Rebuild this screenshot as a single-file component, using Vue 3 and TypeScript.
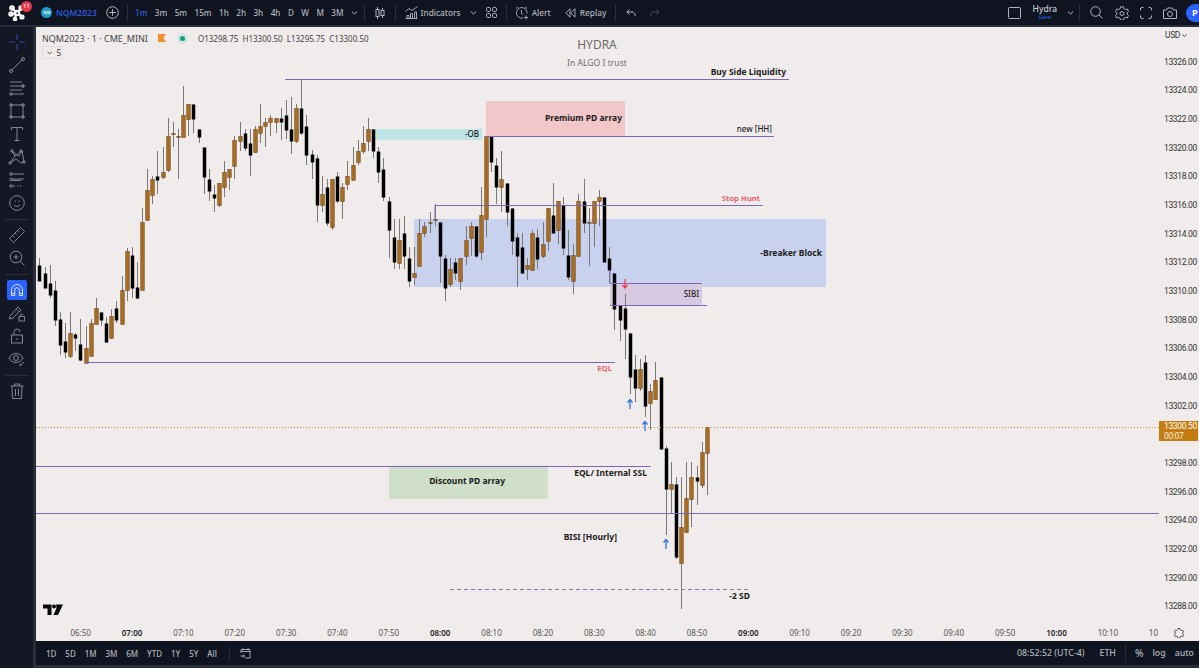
<template>
  <div class="app">
    <!-- top toolbar -->
    <header class="topbar">
      <div class="brand">
        <svg class="logo" width="18" height="17" viewBox="0 0 18 17" fill="none" stroke="#fff" stroke-width="2.2" stroke-linecap="round">
          <circle cx="4" cy="4" r="1.7" />
          <circle cx="9" cy="9" r="2.2" />
          <circle cx="3" cy="10" r="1.6" />
          <circle cx="13" cy="4" r="1.6" />
          <circle cx="7" cy="15" r="1.2" />
          <circle cx="14" cy="13" r="1.5" />
          <path d="M5 5l3 3M11 7l2-2M4 10h3M8 11l-1 3M11 10l2 2" />
        </svg>
        <span class="badge">11</span>
      </div>
      <div class="symbol">
        <span class="symbol-dot">100</span>
        <span class="symbol-name">NQM2023</span>
      </div>
      <svg class="ico plus" width="13" height="13" viewBox="0 0 13 13" fill="none" stroke="currentColor">
        <circle cx="6.5" cy="6.5" r="5.8" />
        <path d="M6.5 3.2v6.6M3.2 6.5h6.6" />
      </svg>
      <i class="sep s1"></i>
      <div class="intervals">
        <span v-for="(t, i) in intervals" :key="t" class="interval" :class="{ active: i === 0 }">{{ t }}</span>
      </div>
      <svg class="ico chev c1" width="7" height="4" viewBox="0 0 7 4" fill="none" stroke="currentColor"><path d="M.8.6 3.5 3 6.2.6" /></svg>
      <i class="sep s2"></i>
      <svg class="ico candle" width="10" height="12" viewBox="0 0 10 12" fill="none" stroke="currentColor">
        <path d="M2.5 0v12M7.5 1v10" />
        <rect x="1" y="2.5" width="3" height="7" fill="#0f1420" />
        <rect x="6" y="3.5" width="3" height="5" fill="#0f1420" />
      </svg>
      <i class="sep s3"></i>
      <svg class="ico ind" width="13" height="13" viewBox="0 0 13 13" fill="none" stroke="currentColor" stroke-width=".9">
        <path d="M.5 5.5 4 2.5l3 2 5.5-4" />
        <path d="M.5 12.5h12M2 12.5v-3h2v3M5.5 12.5v-5h2v5M9.5 12.5v-6.500h2v6.500" />
      </svg>
      <span class="tb-label l-ind">Indicators</span>
      <svg class="ico chev c2" width="7" height="4" viewBox="0 0 7 4" fill="none" stroke="currentColor"><path d="M.8.6 3.5 3 6.2.6" /></svg>
      <svg class="ico layouts" width="11" height="11" viewBox="0 0 11 11" fill="none" stroke="currentColor">
        <rect x=".5" y=".5" width="4" height="4" rx="1.2" />
        <rect x="6.500" y=".5" width="4" height="4" rx="1.2" />
        <rect x=".5" y="6.500" width="4" height="4" rx="1.2" />
        <rect x="6.500" y="6.500" width="4" height="4" rx="1.2" />
      </svg>
      <i class="sep s4"></i>
      <svg class="ico alert" width="14" height="14" viewBox="0 0 14 14" fill="none" stroke="currentColor" stroke-width=".9">
        <path d="M8 12A5.300 5.300 0 1 1 12 7.500" />
        <path d="M6.500 4v3.500l1.800 1M1 2.500 3 .8M10 .8l2 1.700M11 9.500v4M9 11.500h4" />
      </svg>
      <span class="tb-label l-alert">Alert</span>
      <svg class="ico replay" width="11" height="10" viewBox="0 0 11 10" fill="none" stroke="currentColor" stroke-width=".9">
        <path d="M5 .8.8 5 5 9.200zM10 .8 5.800 5 10 9.200z" />
      </svg>
      <span class="tb-label l-replay">Replay</span>
      <i class="sep s5"></i>
      <svg class="ico undo" width="10" height="8" viewBox="0 0 10 8" fill="none" stroke="currentColor">
        <path d="M3.500.5 .8 3l2.700 2.500M1 3h5c2 0 3.200 1.500 3.200 4" />
      </svg>
      <svg class="ico redo" width="10" height="8" viewBox="0 0 10 8" fill="none" stroke="currentColor">
        <path d="M6.500.5 9.200 3 6.500 5.500M9 3H4C2 3 .8 4.500.8 7" />
      </svg>

      <div class="top-right">
        <svg class="ico" width="13" height="12" viewBox="0 0 13 12" fill="none" stroke="currentColor"><rect x=".5" y=".5" width="12" height="11" rx="1" /></svg>
        <div class="layout-name"><span>Hydra</span><small>Save</small></div>
        <svg class="ico chev c3" width="7" height="4" viewBox="0 0 7 4" fill="none" stroke="currentColor"><path d="M.8.6 3.5 3 6.2.6" /></svg>
        <i class="sep s6"></i>
        <svg class="ico search" width="13" height="13" viewBox="0 0 13 13" fill="none" stroke="currentColor">
          <circle cx="5.500" cy="5.500" r="4.800" />
          <path d="m9 9 3.500 3.500" />
        </svg>
        <svg class="ico gear" width="14" height="14" viewBox="0 0 14 14" fill="none" stroke="currentColor">
          <path d="M5.600.8h2.800l.4 1.800 1.600.9 1.800-.5 1.300 2.400-1.300 1.300v1.600l1.300 1.300-1.300 2.400-1.800-.5-1.600.9-.4 1.800H5.600l-.4-1.800-1.600-.9-1.800.5L.5 9.600l1.300-1.300V6.700L.5 5.400l1.300-2.400 1.800.5 1.600-.9z" />
          <circle cx="7" cy="7.500" r="2" />
        </svg>
        <svg class="ico full" width="12" height="12" viewBox="0 0 12 12" fill="none" stroke="currentColor">
          <path d="M.5 3.500V2A1.500 1.500 0 0 1 2 .5h1.500M8.500.5H10A1.500 1.500 0 0 1 11.500 2v1.500M11.500 8.500V10A1.500 1.500 0 0 1 10 11.500H8.500M3.500 11.500H2A1.500 1.500 0 0 1 .5 10V8.500" />
        </svg>
        <svg class="ico camera" width="14" height="12" viewBox="0 0 14 12" fill="none" stroke="currentColor">
          <path d="M.5 3h3l1-2h5l1 2h3v8.500H.5z" />
          <circle cx="7" cy="7" r="2.500" />
        </svg>
        <span class="publish">P</span>
      </div>
    </header>

    <div class="middle">
      <!-- drawing tools -->
      <aside class="tools">
        <template v-for="(tool, i) in tools" :key="i">
          <i v-if="tool === 'sep'" class="tool-sep"></i>
          <div v-else class="tool" :class="{ on: tool === 'magnet', cross: tool === 'cross' }">
            <svg width="18" height="18" viewBox="0 0 18 18" fill="none" stroke="currentColor" stroke-width=".9">
              <g v-if="tool === 'cross'"><path d="M9 1v6M9 11v6M1 9h6M11 9h6" stroke-width="1.100" /></g>
              <g v-else-if="tool === 'line'"><path d="M4 14 14 4" /><circle cx="3" cy="15" r="1.500" /><circle cx="15" cy="3" r="1.500" /></g>
              <g v-else-if="tool === 'fib'"><path d="M2 3h12M2 7h14M2 11h12M4 15h12" /><circle cx="15" cy="7" r="1.300" /><circle cx="3" cy="15" r="1.300" /></g>
              <g v-else-if="tool === 'rect'"><rect x="3" y="3" width="12" height="12" /><circle cx="3" cy="3" r="1.300" /><circle cx="15" cy="3" r="1.300" /><circle cx="3" cy="15" r="1.300" /><circle cx="15" cy="15" r="1.300" /></g>
              <g v-else-if="tool === 'text'"><path d="M3.500 5V2.500h11V5M9 2.500v13M6.500 15.500h5" /></g>
              <g v-else-if="tool === 'pattern'"><path d="M4 3l3 5-5 7 6-4 5 4 3-1-2-11-3 5-2-1zM7 8l6-5" /><circle cx="4" cy="3" r="1.200" /><circle cx="13" cy="3" r="1.200" /><circle cx="2" cy="15" r="1.200" /><circle cx="16" cy="14" r="1.200" /></g>
              <g v-else-if="tool === 'forecast'"><path d="M4 3h12M4 8h12M4 9.500h9M4 15h3M9 15h1.500M12 15h1.500" /><circle cx="3" cy="3" r="1.300" /><circle cx="3" cy="8.500" r="1.300" /><circle cx="3" cy="15" r="1.300" /></g>
              <g v-else-if="tool === 'smile'"><circle cx="9" cy="9" r="7.300" /><path d="M6 11c1 1.800 5 1.800 6 0M7 6.500v1.500M11 6.500v1.500" /></g>
              <g v-else-if="tool === 'ruler'"><path d="M1.500 12.500 12.500 1.500l4 4-11 11zM4.500 9.500l1.800 1.800M7 7l1.800 1.800M9.500 4.500l1.800 1.800" /></g>
              <g v-else-if="tool === 'zoom'"><circle cx="8" cy="8" r="5.800" /><path d="m12 12 4.500 4.500M8 5.500v5M5.500 8h5" /></g>
              <g v-else-if="tool === 'magnet'"><path d="M3.500 14.500V9a5.500 5.500 0 0 1 11 0v5.500h-3.200V9a2.300 2.300 0 0 0-4.600 0v5.500zM3.500 12.500h3.200M11.300 12.500h3.200" stroke-width="1" /></g>
              <g v-else-if="tool === 'pencil'"><path d="M2 12 10 3l3 3-8 8-3.500 1zM8.500 5l3 3" /><rect x="11" y="12.500" width="5.500" height="4.500" /><path d="M12.500 12.500V11a1.300 1.300 0 0 1 2.500 0" /></g>
              <g v-else-if="tool === 'lock'"><rect x="3.500" y="8" width="11" height="8" /><path d="M6 8V5a3 3 0 0 1 6 0M9 11v2" /></g>
              <g v-else-if="tool === 'eye'"><path d="M1 8c3-6 11-6 14 0-3 6-11 6-14 0z" /><circle cx="8" cy="8" r="2.500" /><path d="m11 16 5-4M12 13.500l2 2" /></g>
              <g v-else-if="tool === 'trash'"><path d="M2.500 4h13M6.500 4V2h5v2M4 4l.5 12.500h9L14 4M7.500 7v7M10.500 7v7" /></g>
            </svg>
          </div>
        </template>
      </aside>

      <div class="workspace">
        <div class="plot-row">
          <main class="plot">
            <svg class="canvas" viewBox="36 27 1123 597" width="1123" height="597">
              <!-- zones -->
              <rect x="486" y="101" width="139" height="35" fill="#f2c7c9" />
              <rect x="372" y="129" width="110" height="11" fill="#c0e3e4" />
              <rect x="414" y="219" width="412" height="68" fill="#c8d1ee" />
              <rect x="610" y="283" width="92" height="22" fill="#d8c9e2" />
              <rect x="389" y="466" width="159" height="33" fill="#d0dfca" />

              <!-- candles -->
              <g v-for="b in bars" :key="b.x">
                <line :x1="b.x" :x2="b.x" :y1="b.wickTop" :y2="b.wickBottom" class="wick" />
                <rect
                  :x="b.x - 1.75"
                  :y="b.bodyTop"
                  width="3.500"
                  :height="b.bodyHeight"
                  :class="b.up ? 'up' : 'down'"
                />
              </g>

              <!-- levels -->
              <path class="level" d="M285 79.500H789M486 136.500H774M435 219V205.500H763M610 270V283.500H702M610 305.500H707M85 362.500H615M36 466.500H651M36 513.500H1159" />
              <path class="dashed" d="M450 589.500H751" />
              <path class="last" d="M36 427.500H1159" />

              <!-- arrows -->
              <path class="arrow red" d="M625 279v9M622.500 285l2.500 3 2.500-3" />
              <path class="arrow blue" d="M630 409v-9M627.500 402.500l2.500-3 2.500 3" />
              <path class="arrow blue" d="M645 431v-9M642.500 424.500l2.500-3 2.500 3" />
              <path class="arrow blue" d="M666 549v-9M663.500 542.500l2.500-3 2.500 3" />

              <!-- labels -->
              <text
                v-for="n in notes"
                :key="n.text"
                :x="n.x"
                :y="n.y"
                class="note"
                :class="n.cls"
                text-anchor="end"
              >{{ n.text }}</text>
              <text x="597" y="49" class="watermark big" text-anchor="middle">HYDRA</text>
              <text x="597" y="66" class="watermark" text-anchor="middle">In ALGO I trust</text>

              <path d="M43 604.500h8.500v10.500h-4v-6.500H43zM56 604.500h7l-5 10.500h-4.500l3-7z" fill="#0a0a0a" />
              <circle cx="54" cy="606.500" r="2" fill="#0a0a0a" />
            </svg>

            <div class="legend">
              <div class="legend-row">
                <span class="legend-title">NQM2023 · 1 · CME_MINI</span>
                <svg class="flag" width="8" height="8" viewBox="0 0 8 8"><path d="M0 0h8L5.500 4 8 8H0z" fill="#f2902b" /></svg>
                <span class="status"><i></i></span>
                <span class="ohlc">O13298.75&nbsp; H13300.50&nbsp; L13295.75&nbsp; C13300.50</span>
              </div>
              <div class="legend-count">
                <svg width="6" height="4" viewBox="0 0 6 4" fill="none" stroke="#444"><path d="M.5.5 3 3 5.500.5" /></svg>
                5
              </div>
            </div>
          </main>

          <div class="prices">
            <div class="currency">USD <svg width="5" height="3" viewBox="0 0 5 3" fill="none" stroke="#444"><path d="M.4.4 2.500 2.500 4.600.4" /></svg></div>
            <div v-for="p in prices" :key="p" class="price">{{ p === '13300.00' ? '' : p }}</div>
            <div class="last-tag"><span>13300.50</span><span class="timer">00:07</span></div>
          </div>
        </div>

        <div class="time-row">
          <div class="times">
            <span v-for="t in times" :key="t" class="time" :class="{ hour: t.endsWith(':00') }">{{ t }}</span>
            <span class="time tail">10</span>
          </div>
          <div class="axis-gear">
            <svg width="10" height="10" viewBox="0 0 14 14" fill="none" stroke="#333" stroke-width="1.200">
              <path d="M5.600.8h2.800l.4 1.800 1.600.9 1.800-.5 1.300 2.400-1.300 1.300v1.600l1.300 1.300-1.300 2.400-1.800-.5-1.600.9-.4 1.800H5.600l-.4-1.800-1.600-.9-1.800.5L.5 9.600l1.300-1.300V6.700L.5 5.400l1.300-2.400 1.800.5 1.600-.9z" />
            </svg>
          </div>
        </div>

        <footer class="bottombar">
          <span v-for="r in ranges" :key="r" class="range">{{ r }}</span>
          <i class="sep s7"></i>
          <svg class="ico goto" width="11" height="11" viewBox="0 0 11 11" fill="none" stroke="currentColor" stroke-width=".9">
            <path d="M1 5V1.500h9V10H5M1 3.500h9M3 .2v2M8 .2v2M.5 8h4M3 6.500 4.500 8 3 9.500" />
          </svg>
          <div class="bottom-right">
            <span class="clock">08:52:52 (UTC-4)</span>
            <span>ETH</span>
            <i class="sep"></i>
            <span class="pct">%</span>
            <span>log</span>
            <span>auto</span>
          </div>
        </footer>
      </div>
    </div>
  </div>
</template>

<script setup lang="ts">
type Bar = [number, number, number, number, number]

const intervals = ['1m', '3m', '5m', '15m', '1h', '2h', '3h', '4h', 'D', 'W', 'M', '3M']
const ranges = ['1D', '5D', '1M', '3M', '6M', 'YTD', '1Y', '5Y', 'All']
const tools = [
  'cross', 'line', 'fib', 'rect', 'text', 'pattern', 'forecast', 'smile', 'sep',
  'ruler', 'zoom', 'sep', 'magnet', 'pencil', 'lock', 'eye', 'sep', 'trash',
]

const prices = Array.from({ length: 20 }, (_, i) => (13326 - i * 2).toFixed(2))

const times: string[] = []
for (let m = 410; m <= 610; m += 10) {
  times.push(`${String(Math.floor(m / 60)).padStart(2, '0')}:${String(m % 60).padStart(2, '0')}`)
}

const notes = [
  { text: 'Buy Side Liquidity', x: 786, y: 75, cls: '' },
  { text: 'Premium PD array', x: 622, y: 121, cls: '' },
  { text: 'new [HH]', x: 772, y: 132, cls: 'thin' },
  { text: '-OB', x: 479, y: 137, cls: 'thin' },
  { text: 'Stop Hunt', x: 760, y: 201, cls: 'thin red' },
  { text: '-Breaker Block', x: 822, y: 256, cls: '' },
  { text: 'SIBI', x: 699, y: 297, cls: 'thin' },
  { text: 'EQL', x: 612, y: 371, cls: 'thin red' },
  { text: 'EQL/ Internal SSL', x: 647, y: 476, cls: '' },
  { text: 'Discount PD array', x: 505, y: 484, cls: '' },
  { text: 'BISI [Hourly]', x: 617, y: 540, cls: '' },
  { text: '-2 SD', x: 750, y: 599, cls: '' },
]

// wick top, body top, body bottom, wick bottom, up — traced at 3x, per crop
const morning: Bar[] = [
  [565, 586, 632, 632, 0], [590, 610, 653, 655, 0], [586, 640, 675, 683, 0], [632, 661, 750, 768, 0],
  [727, 748, 825, 855, 0], [760, 814, 846, 865, 0], [727, 790, 857, 865, 1], [790, 791, 803, 843, 0],
  [748, 823, 869, 872, 0], [768, 834, 878, 878, 1], [748, 759, 857, 857, 1], [684, 714, 761, 761, 1],
  [727, 727, 750, 768, 0], [740, 759, 815, 820, 0], [716, 738, 803, 803, 1], [694, 715, 750, 760, 0],
  [618, 661, 761, 761, 1], [533, 543, 661, 692, 1], [532, 555, 653, 684, 0], [575, 651, 685, 686, 0],
  [415, 457, 661, 661, 1], [297, 361, 449, 449, 1], [318, 328, 374, 402, 1], [242, 318, 329, 372, 0],
  [232, 306, 320, 326, 1], [145, 198, 300, 306, 1], [157, 189, 191, 232, 1], [178, 198, 200, 327, 1],
  [48, 135, 200, 200, 1], [102, 102, 146, 198, 1], [102, 102, 146, 190, 0], [178, 178, 200, 218, 0],
  [232, 232, 320, 372, 0], [297, 328, 362, 392, 0], [345, 372, 383, 425, 0], [340, 340, 405, 412, 1],
  [274, 306, 352, 382, 1], [296, 297, 320, 360, 1], [198, 210, 287, 327, 1], [157, 198, 212, 242, 1],
  [178, 189, 233, 242, 0], [178, 220, 254, 317, 0], [168, 178, 245, 250, 1], [102, 168, 190, 220, 1],
  [145, 157, 169, 230, 1], [135, 145, 157, 197, 1], [145, 145, 157, 188, 1], [115, 145, 157, 210, 0],
  [91, 135, 179, 207, 0], [82, 178, 212, 252, 0], [102, 114, 212, 218, 1], [28, 114, 190, 196, 0],
  [135, 168, 254, 285, 0], [240, 252, 275, 327, 0], [255, 264, 404, 457, 0], [318, 373, 404, 425, 1],
  [328, 351, 458, 468, 0], [328, 328, 470, 480, 1], [307, 318, 394, 400, 0], [340, 351, 394, 447, 1],
  [274, 319, 341, 360, 1], [232, 285, 329, 330, 1], [210, 243, 275, 285, 1], [168, 220, 243, 252, 1],
  [145, 178, 212, 242, 1], [178, 178, 243, 264, 0], [232, 243, 307, 338, 0], [264, 297, 382, 392, 0],
]
const midday: Bar[] = [
  [322, 333, 420, 505, 0], [388, 441, 517, 537, 0], [388, 450, 518, 537, 1], [378, 430, 497, 537, 0],
  [470, 505, 572, 590, 0], [470, 549, 560, 585, 1], [388, 430, 527, 527, 1], [397, 408, 430, 440, 1],
  [366, 397, 398, 430, 1], [343, 387, 388, 407, 1], [397, 397, 497, 580, 0], [495, 505, 593, 633, 0],
  [505, 538, 582, 590, 1], [505, 517, 550, 570, 0], [505, 505, 572, 600, 1], [408, 450, 497, 525, 1],
  [397, 408, 443, 497, 1], [408, 408, 497, 505, 0], [290, 376, 486, 510, 1], [137, 137, 387, 440, 1],
  [137, 137, 215, 245, 0], [205, 226, 292, 343, 0], [183, 267, 292, 365, 1], [280, 280, 367, 407, 0],
  [355, 355, 452, 495, 0], [430, 441, 497, 590, 0], [430, 472, 550, 552, 0], [505, 526, 538, 570, 1],
  [420, 430, 540, 540, 1], [418, 441, 506, 538, 0], [397, 462, 497, 505, 1], [355, 355, 452, 482, 1],
  [280, 376, 430, 430, 0], [333, 333, 420, 462, 1], [322, 344, 473, 495, 0], [420, 495, 560, 570, 0],
  [462, 495, 572, 612, 1], [312, 333, 497, 497, 1], [267, 333, 398, 430, 0], [355, 397, 398, 527, 1],
  [333, 333, 398, 472, 1], [300, 322, 334, 408, 1], [322, 322, 517, 517, 0], [470, 505, 540, 580, 0],
]
const selloff: Bar[] = [
  [10, 10, 117, 180, 0], [105, 105, 150, 212, 0], [72, 114, 176, 267, 0], [190, 190, 320, 373, 0],
  [255, 297, 353, 396, 0], [267, 297, 353, 362, 1], [255, 276, 408, 440, 0], [342, 364, 398, 480, 1],
  [276, 331, 386, 386, 1], [320, 320, 537, 537, 0], [527, 535, 656, 795, 0], [576, 642, 656, 730, 1],
  [622, 642, 860, 868, 0], [622, 772, 880, 1018, 1], [576, 685, 786, 790, 1], [576, 622, 686, 770, 1],
  [588, 622, 632, 706, 0], [515, 547, 645, 653, 1], [472, 472, 548, 675, 1],
]

const traced = [
  ...morning.map(b => ({ b, top: 70 })),
  ...midday.map(b => ({ b, top: 90 })),
  ...selloff.map(b => ({ b, top: 270 })),
]

const bars = traced.map(({ b, top }, i) => {
  const y = (v: number) => Math.round(top + v / 3)
  return {
    x: Math.round(39.4 + i * 5.134) + 0.5,
    wickTop: y(b[0]),
    bodyTop: y(b[1]) + 0.5,
    bodyHeight: Math.max(y(b[2]) - y(b[1]), 1),
    wickBottom: y(b[3]),
    up: b[4] === 1,
  }
})
</script>

<style>
html,
body {
  margin: 0;
  height: 100%;
  overflow: hidden;
  background: #141824;
}
</style>

<style scoped>
.app {
  width: 1199px;
  height: 668px;
  display: flex;
  flex-direction: column;
  overflow: hidden;
  background: #2a2e39;
  font-family: "Noto Sans", "Liberation Sans", sans-serif;
  color: #b2b5be;
}

/* === top toolbar === */
.topbar {
  flex: 0 0 25px;
  margin-bottom: 2px;
  display: flex;
  align-items: center;
  background: #0f1420;
  font-size: 8.200px;
  font-weight: 500;
  overflow: hidden;
}

.ico {
  flex: none;
  color: #b2b5be;
}

.sep {
  flex: none;
  width: 1px;
  height: 17px;
  background: #2a2e39;
}

.brand {
  position: relative;
  width: 36px;
  height: 25px;
  flex: none;
}

.logo {
  position: absolute;
  left: 8px;
  top: 4px;
}

.badge {
  position: absolute;
  left: 21px;
  top: 1px;
  width: 11px;
  height: 11px;
  border-radius: 50%;
  background: #e5394a;
  color: #fff;
  font-size: 6px;
  line-height: 11px;
  text-align: center;
}

.symbol {
  display: flex;
  align-items: center;
  flex: none;
  width: 65px;
  margin-left: 5px;
}

.symbol-dot {
  width: 11px;
  height: 11px;
  border-radius: 50%;
  background: #1f9bc4;
  color: #fff;
  font-size: 4px;
  font-weight: 700;
  line-height: 11px;
  text-align: center;
}

.symbol-name {
  margin-left: 4px;
  color: #2a5ad6;
  font-size: 8.500px;
  font-weight: 600;
}

.s1 { margin-left: 8px; }

.intervals {
  display: flex;
  flex: none;
  margin-left: 7px;
  gap: 7.400px;
}

.interval.active { color: #2a62d8; }

.c1 { margin-left: 7px; }
.s2 { margin-left: 6px; }
.candle { margin-left: 10px; }
.s3 { margin-left: 10px; }
.ind { margin-left: 9px; }
.tb-label { flex: none; font-size: 8.300px; }
.l-ind { margin-left: 3px; }
.c2 { margin-left: 9px; }
.layouts { margin-left: 9px; }
.s4 { margin-left: 9px; }
.alert { margin-left: 8px; }
.l-alert { margin-left: 3px; }
.replay { margin-left: 14px; }
.l-replay { margin-left: 4px; }
.s5 { margin-left: 9px; }
.undo { margin-left: 10px; }
.redo { margin-left: 14px; opacity: 0.35; }

.top-right {
  margin-left: auto;
  display: flex;
  align-items: center;
  flex: none;
}

.layout-name {
  display: flex;
  flex-direction: column;
  align-items: center;
  margin-left: 12px;
  font-size: 8.500px;
  line-height: 10px;
  color: #c8cad0;
}

.layout-name small {
  font-size: 6px;
  line-height: 7px;
  color: #2a5ad6;
}

.c3 { margin-left: 10px; }
.s6 { margin-left: 5px; }
.search { margin-left: 10px; }
.gear { margin-left: 12px; }
.full { margin-left: 11px; }
.camera { margin-left: 11px; }

.publish {
  width: 26px;
  height: 18px;
  margin-left: 9px;
  margin-right: -13px;
  padding-left: 6px;
  box-sizing: border-box;
  border-radius: 9px;
  background: #2962ff;
  color: #fff;
  font-size: 9px;
  font-weight: 700;
  line-height: 18px;
}

/* === main area === */
.middle {
  flex: 1;
  display: flex;
  min-height: 0;
}

.tools {
  flex: 0 0 33px;
  margin-right: 3px;
  padding-top: 5px;
  box-sizing: border-box;
  display: flex;
  flex-direction: column;
  align-items: center;
  background: #141824;
}

.tool {
  flex: none;
  width: 20px;
  height: 20px;
  margin-bottom: 3px;
  display: flex;
  align-items: center;
  justify-content: center;
  border-radius: 2px;
  color: #8f929b;
}

.tool.cross { color: #2a4a9c; }
.tool.on { background: #2962ff; color: #d8e2ff; }

.tool-sep {
  flex: none;
  width: 24px;
  height: 1px;
  margin: 3px 0 5px;
  background: #2a2e39;
}

.workspace {
  flex: 1;
  min-width: 0;
  display: flex;
  flex-direction: column;
}

.plot-row {
  flex: 0 0 597px;
  display: flex;
}

.plot {
  position: relative;
  flex: 0 0 1123px;
  overflow: hidden;
  background: #f1ecec;
}

.canvas {
  display: block;
}

.wick { stroke: #7a7775; stroke-width: 1; }
.up { fill: #a96d22; stroke: #6e4c20; stroke-width: 0.6; }
.down { fill: #000; }

.level { fill: none; stroke: #8068b8; stroke-width: 1; }
.dashed { fill: none; stroke: #9a6cb4; stroke-dasharray: 4 3; }
.last { fill: none; stroke: #d08a3e; stroke-dasharray: 1 2; }

.arrow { fill: none; stroke-width: 1.300; }
.arrow.red { stroke: #e8404c; }
.arrow.blue { stroke: #2f6fe0; }

.note {
  font-size: 8.500px;
  font-weight: 700;
  fill: #1c1c1c;
}

.note.thin {
  font-size: 8px;
  font-weight: 500;
}

.note.red { font-size: 7.800px; font-weight: 600; fill: #e8505b; }

.watermark {
  font-size: 8.600px;
  fill: #6e6a6a;
}

.watermark.big { font-size: 12px; }

.legend {
  position: absolute;
  left: 6px;
  top: 4px;
  color: #333;
}

.legend-row {
  display: flex;
  align-items: center;
  height: 14px;
}

.legend-title {
  font-size: 9px;
  color: #444;
}

.flag { margin-left: 10px; }

.status {
  width: 11px;
  height: 11px;
  margin-left: 11px;
  display: flex;
  align-items: center;
  justify-content: center;
  border-radius: 50%;
  background: #d5e6e2;
}

.status i {
  width: 5px;
  height: 5px;
  border-radius: 50%;
  background: #139d7f;
}

.ohlc {
  margin-left: 10px;
  font-size: 8px;
  color: #444;
}

.legend-count {
  display: flex;
  align-items: center;
  gap: 4px;
  width: 20px;
  height: 13px;
  margin-top: 1px;
  padding-left: 4px;
  box-sizing: border-box;
  border: 1px solid #e2dcdc;
  border-radius: 2px;
  font-size: 8px;
  color: #333;
}

/* === price scale === */
.prices {
  position: relative;
  flex: 1;
  padding-top: 3px;
  background: #f1ecec;
  font-family: Roboto, "Liberation Sans", sans-serif;
  font-size: 8.500px;
  letter-spacing: -0.35px;
  color: #333;
}

.currency {
  height: 17.500px;
  padding-left: 6px;
  line-height: 11px;
}

.currency svg { vertical-align: middle; }

.price {
  height: 28.680px;
  line-height: 28.680px;
  padding-left: 5px;
}

.last-tag {
  position: absolute;
  left: 0;
  right: 1px;
  top: 394px;
  height: 20px;
  padding-left: 5px;
  box-sizing: border-box;
  display: flex;
  flex-direction: column;
  background: #c47d12;
  color: #fff;
  font-size: 8.500px;
  letter-spacing: -0.35px;
  line-height: 10px;
}

.timer { opacity: 0.85; }

/* === time axis === */
.time-row {
  flex: 0 0 17px;
  display: flex;
  background: #f1ecec;
}

.times {
  flex: 0 0 1123px;
  display: flex;
  padding-left: 19px;
  box-sizing: border-box;
  overflow: hidden;
  font-size: 8px;
  line-height: 17px;
  color: #555;
}

.time {
  flex: 0 0 51.370px;
  text-align: center;
}

.time.hour { color: #1c1c1c; font-weight: 600; }

.time.tail {
  flex: 1;
  padding-right: 1px;
  text-align: right;
}

.axis-gear {
  flex: 1;
  display: flex;
  align-items: center;
  justify-content: center;
}

/* === bottom toolbar === */
.bottombar {
  flex: 0 0 24px;
  display: flex;
  align-items: center;
  padding-left: 10px;
  background: #0f1420;
  font-size: 8px;
  font-weight: 500;
}

.range { margin-right: 8.900px; }
.s7 { margin-left: 3px; height: 15px; }
.goto { margin-left: 10px; }

.bottom-right {
  margin-left: auto;
  padding-right: 5px;
  display: flex;
  align-items: center;
  gap: 9px;
  font-size: 8.800px;
}

.clock { margin-right: 6px; }
.pct { font-size: 10px; }
</style>
